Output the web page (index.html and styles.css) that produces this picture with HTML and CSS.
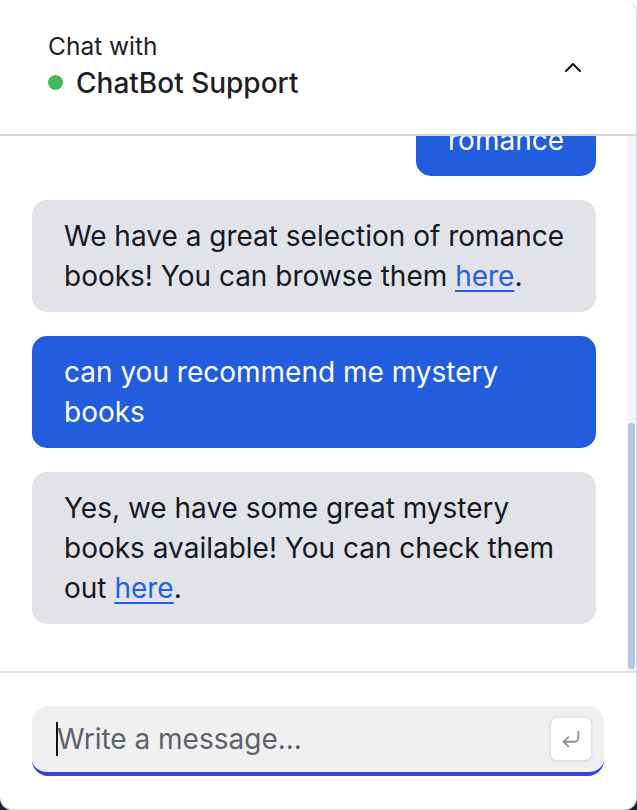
FILE: index.html
```html
<!DOCTYPE html>
<html lang="en">
<head>
<meta charset="utf-8">
<title>Chat with ChatBot Support</title>
<link rel="stylesheet" href="styles.css">
</head>
<body>
<div class="widget">
  <header class="header">
    <div class="title">
      <div class="subtitle">Chat with</div>
      <div class="name"><span class="dot"></span>ChatBot Support</div>
    </div>
    <button class="toggle" aria-label="Collapse">
      <svg width="18" height="12" viewBox="0 0 18 12"><polyline points="2,10 9,3 16,10" fill="none" stroke="#111" stroke-width="2" stroke-linecap="round" stroke-linejoin="round"/></svg>
    </button>
  </header>
  <div class="body">
    <main class="messages">
      <div class="thread">
        <div class="msg bot">Hi there! I'm the ChatBot Support assistant.</div>
        <div class="msg user">hello</div>
        <div class="msg bot">Hello! What kind of books are you interested in today?</div>
        <div class="msg user">romance</div>
        <div class="msg bot">We have a great selection of romance books! You can browse them <a href="#">here</a>.</div>
        <div class="msg user">can you recommend me mystery books</div>
        <div class="msg bot">Yes, we have some great mystery books available! You can check them out <a href="#">here</a>.</div>
      </div>
    </main>
    <div class="scrollbar"><div class="thumb"></div></div>
  </div>
  <footer class="footer">
    <div class="composer">
      <div class="field"><span class="caret"></span><span class="placeholder">Write a message...</span></div>
      <button class="send" aria-label="Send">
        <svg width="22" height="22" viewBox="0 0 24 24" fill="none" stroke="#8b909b" stroke-width="2" stroke-linecap="round" stroke-linejoin="round"><polyline points="9 10 4 15 9 20"/><path d="M20 4v7a4 4 0 0 1-4 4H4"/></svg>
      </button>
    </div>
  </footer>
</div>
</body>
</html>
```
FILE: styles.css
```css
* { box-sizing: border-box; }
html, body { margin: 0; height: 100%; }
body {
  background: linear-gradient(#ffffff 50%, #1d2130 50%);
  font-family: Inter, "Noto Sans", sans-serif;
  color: #181b24;
}
.widget {
  height: 100vh;
  background: #fff;
  border: 1px solid #dadade;
  border-left: none;
  border-top: none;
  border-radius: 0 12px 12px 12px;
  display: flex;
  flex-direction: column;
  overflow: hidden;
}
.header {
  flex: none;
  height: 136px;
  border-bottom: 2px solid #d3d3d8;
  display: flex;
  align-items: center;
  justify-content: space-between;
  padding: 0 52px 0 48px;
}
.title { display: flex; flex-direction: column; padding-bottom: 4px; }
.subtitle { font-size: 24.5px; line-height: 32px; color: #1d1f24; }
.name {
  font-size: 28px;
  line-height: 36px;
  font-weight: 500;
  color: #1d1f24;
  display: flex;
  align-items: center;
  gap: 13px;
  margin-top: 3px;
}
.dot { width: 15px; height: 15px; border-radius: 50%; background: #48b95a; }
.toggle {
  border: none; background: none; padding: 0; margin: 0;
  display: flex; align-items: center; justify-content: center;
  width: 22px; height: 22px;
}
.body {
  flex: 1;
  min-height: 0;
  position: relative;
  display: flex;
}
.messages {
  flex: 1;
  min-height: 0;
  overflow-y: auto;
  display: flex;
  flex-direction: column-reverse;
  scrollbar-width: none;
}
.messages::-webkit-scrollbar { display: none; }
.scrollbar {
  position: absolute;
  top: 0; right: 0; bottom: 0;
  width: 9px;
  background: #f3f6fb;
}
.thumb {
  position: absolute;
  left: 1px; right: 1px; bottom: 2px;
  height: 246px;
  background: #b4c7e3;
  border-radius: 4px;
}
.thread {
  display: flex;
  flex-direction: column;
  gap: 24px;
  padding: 40px 40px 47px 32px;
}
.msg {
  font-size: 28px;
  line-height: 40px;
  padding: 16px 30px 16px 32px;
  border-radius: 15px;
  max-width: 100%;
}
.msg.bot { align-self: flex-start; background: #e2e3e8; color: #161922; }
.msg.user { align-self: flex-end; background: #215ddc; color: #fff; padding: 16px 32px; }
.msg a { color: #2460e0; text-decoration: underline; text-underline-offset: 4px; }
.footer {
  flex: none;
  border-top: 2px solid #e2e2e6;
  padding: 33px 32px 33px 32px;
}
.composer {
  height: 70px;
  background: #f0f0f1;
  border-bottom: 4px solid #3b42d3;
  border-radius: 16px;
  display: flex;
  align-items: center;
  justify-content: space-between;
  padding: 0 11px 0 24px;
}
.field { display: flex; align-items: center; }
.caret { width: 2px; height: 34px; background: #111; margin-right: -1px; }
.placeholder { font-size: 28px; color: #5d626d; line-height: 34px; }
.send {
  width: 44px; height: 46px;
  background: #fff;
  border: 2px solid #e2e2e8;
  border-radius: 8px;
  display: flex; align-items: center; justify-content: center;
  padding: 0;
}
```
